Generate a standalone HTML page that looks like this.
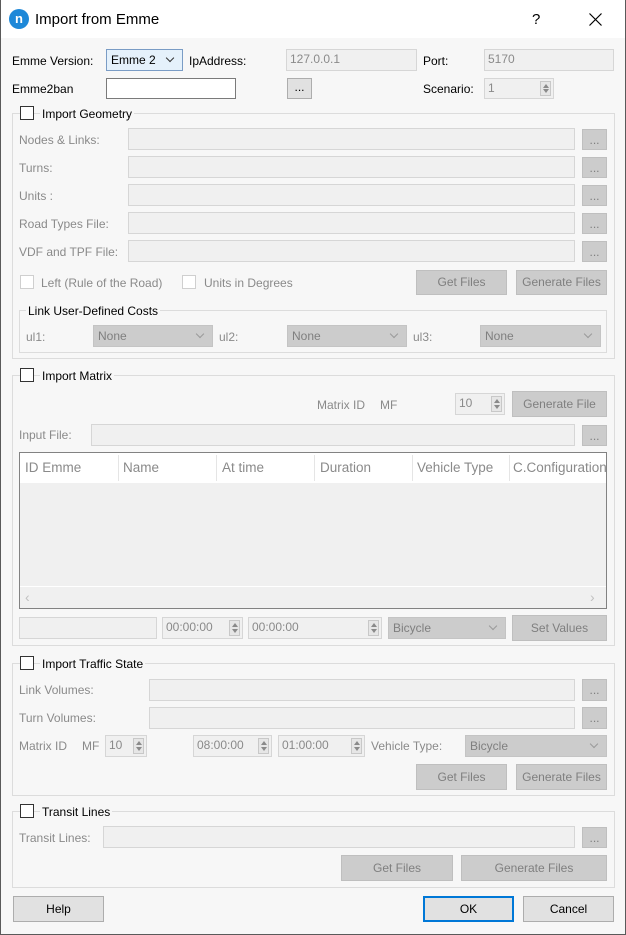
<!DOCTYPE html>
<html><head><meta charset="utf-8"><style>
*{box-sizing:border-box;margin:0;padding:0}
body{width:626px;height:935px;overflow:hidden;background:#f7f7f7;font-family:"Liberation Sans",sans-serif;font-size:12px;color:#000;position:relative}
.a{position:absolute}
.win{left:0;top:0;width:626px;height:935px;border:1px solid #5a5a5a;border-top:none}
.title{left:1px;top:0;width:624px;height:38px;background:#fff}
.l{position:absolute;white-space:nowrap;line-height:14px}
.g{color:#8a8a8a}
.f{position:absolute;background:#f0f0f0;border:1px solid #d6d6d6;color:#8a8a8a;padding-left:3px;line-height:19px}
.b{position:absolute;background:#cccccc;border:1px solid #bfbfbf;color:#7f7f7f;text-align:center}
.be{position:absolute;background:#e1e1e1;border:1px solid #adadad;color:#000;text-align:center}
.grp{position:absolute;border:1px solid #dcdcdc}
.cb{position:absolute;width:14px;height:14px;border:1px solid #333;background:#fff}
.cbd{position:absolute;width:14px;height:14px;border:1px solid #cfcfcf;background:#fff}
.lg{position:absolute;background:#f7f7f7;padding:0 2px;line-height:14px;white-space:nowrap}
.cmb{position:absolute;background:#cccccc;border:1px solid #c4c4c4;color:#7f7f7f;padding-left:4px}
.cmb:after{content:"";position:absolute;right:9px;top:5px;width:5px;height:5px;border-right:1px solid #9a9a9a;border-bottom:1px solid #9a9a9a;transform:rotate(45deg)}
.sp{position:absolute;right:2px;top:2px;width:11px;bottom:2px;border:1px solid #c8c8c8;background:#e6e6e6}
.sp:before{content:"";position:absolute;left:2px;top:2px;border-left:3px solid transparent;border-right:3px solid transparent;border-bottom:4px solid #8a8a8a}
.sp:after{content:"";position:absolute;left:2px;bottom:2px;border-left:3px solid transparent;border-right:3px solid transparent;border-top:4px solid #8a8a8a}
</style></head><body>
<div class="a title"></div>
<div class="a win"></div>
<div class="a" style="left:9px;top:9px;width:20px;height:20px;border-radius:50%;background:#1e88d8;color:#fff;font-size:13px;font-weight:bold;text-align:center;line-height:19px">n</div>
<div class="l" style="left:35px;top:11px;font-size:15px;line-height:18px">Import from Emme</div>
<div class="l" style="left:532px;top:11px;font-size:15px;line-height:18px">?</div>
<svg class="a" style="left:589px;top:13px" width="13" height="13"><path d="M0.5 0.5L12.5 12.5M12.5 0.5L0.5 12.5" stroke="#000" stroke-width="1.2"/></svg>

<div class="l" style="left:12px;top:54px">Emme Version:</div>
<div class="a" style="left:106px;top:49px;width:77px;height:22px;border:1px solid #7a9cc5;background:#e5f1fb;padding-left:4px;line-height:20px">Emme 2</div>
<div class="a" style="left:167px;top:55px;width:6px;height:6px;border-right:1px solid #333;border-bottom:1px solid #333;transform:rotate(45deg)"></div>
<div class="l" style="left:189px;top:54px">IpAddress:</div>
<div class="f" style="left:286px;top:49px;width:131px;height:22px">127.0.0.1</div>
<div class="l" style="left:423px;top:54px">Port:</div>
<div class="f" style="left:484px;top:49px;width:130px;height:22px">5170</div>

<div class="l" style="left:12px;top:82px">Emme2ban</div>
<div class="a" style="left:106px;top:78px;width:130px;height:21px;border:1px solid #7a7a7a;background:#fff"></div>
<div class="be" style="left:287px;top:78px;width:25px;height:21px;line-height:17px">...</div>
<div class="l" style="left:423px;top:82px">Scenario:</div>
<div class="f" style="left:484px;top:78px;width:70px;height:21px">1<div class="sp"></div></div>

<!-- Geometry -->
<div class="grp" style="left:12px;top:113px;width:603px;height:246px"></div>
<div class="lg" style="left:40px;top:107px">Import Geometry</div>
<div class="cb" style="left:20px;top:106px"></div>
<div class="l g" style="left:19px;top:133px">Nodes &amp; Links:</div>
<div class="f" style="left:128px;top:128px;width:447px;height:22px"></div>
<div class="b" style="left:582px;top:129px;width:25px;height:21px;line-height:20px">...</div>
<div class="l g" style="left:19px;top:161px">Turns:</div>
<div class="f" style="left:128px;top:156px;width:447px;height:22px"></div>
<div class="b" style="left:582px;top:157px;width:25px;height:21px;line-height:20px">...</div>
<div class="l g" style="left:19px;top:189px">Units :</div>
<div class="f" style="left:128px;top:184px;width:447px;height:22px"></div>
<div class="b" style="left:582px;top:185px;width:25px;height:21px;line-height:20px">...</div>
<div class="l g" style="left:19px;top:217px">Road Types File:</div>
<div class="f" style="left:128px;top:212px;width:447px;height:22px"></div>
<div class="b" style="left:582px;top:213px;width:25px;height:21px;line-height:20px">...</div>
<div class="l g" style="left:19px;top:245px">VDF and TPF File:</div>
<div class="f" style="left:128px;top:240px;width:447px;height:22px"></div>
<div class="b" style="left:582px;top:241px;width:25px;height:21px;line-height:20px">...</div>
<div class="cbd" style="left:20px;top:275px"></div>
<div class="l g" style="left:41px;top:276px">Left (Rule of the Road)</div>
<div class="cbd" style="left:182px;top:275px"></div>
<div class="l g" style="left:204px;top:276px">Units in Degrees</div>
<div class="b" style="left:416px;top:270px;width:91px;height:25px;line-height:23px">Get Files</div>
<div class="b" style="left:516px;top:270px;width:91px;height:25px;line-height:23px">Generate Files</div>
<div class="grp" style="left:19px;top:310px;width:588px;height:43px"></div>
<div class="lg" style="left:26px;top:304px;color:#000">Link User-Defined Costs</div>
<div class="l g" style="left:26px;top:330px">ul1:</div>
<div class="cmb" style="left:93px;top:325px;width:120px;height:22px;line-height:20px">None</div>
<div class="l g" style="left:219px;top:330px">ul2:</div>
<div class="cmb" style="left:287px;top:325px;width:120px;height:22px;line-height:20px">None</div>
<div class="l g" style="left:413px;top:330px">ul3:</div>
<div class="cmb" style="left:480px;top:325px;width:121px;height:22px;line-height:20px">None</div>

<!-- Matrix -->
<div class="grp" style="left:12px;top:375px;width:603px;height:271px"></div>
<div class="lg" style="left:40px;top:369px">Import Matrix</div>
<div class="cb" style="left:20px;top:368px"></div>
<div class="l g" style="left:317px;top:398px">Matrix ID</div>
<div class="l g" style="left:380px;top:398px">MF</div>
<div class="f" style="left:455px;top:393px;width:50px;height:22px">10<div class="sp"></div></div>
<div class="b" style="left:512px;top:391px;width:95px;height:26px;line-height:24px">Generate File</div>
<div class="l g" style="left:19px;top:428px">Input File:</div>
<div class="f" style="left:91px;top:424px;width:484px;height:22px"></div>
<div class="b" style="left:582px;top:425px;width:25px;height:21px;line-height:20px">...</div>
<div class="a" style="left:19px;top:452px;width:588px;height:157px;border:1px solid #828282;background:#f0f0f0;overflow:hidden">
 <div class="a" style="left:0;top:0;width:588px;height:30px;background:#fff;color:#8a8a8a;font-size:13.5px;line-height:30px">
  <span class="a" style="left:5px">ID Emme</span>
  <span class="a" style="left:98px;top:2px;height:26px;border-left:1px solid #e5e5e5"></span><span class="a" style="left:103px">Name</span>
  <span class="a" style="left:196px;top:2px;height:26px;border-left:1px solid #e5e5e5"></span><span class="a" style="left:202px">At time</span>
  <span class="a" style="left:294px;top:2px;height:26px;border-left:1px solid #e5e5e5"></span><span class="a" style="left:300px">Duration</span>
  <span class="a" style="left:392px;top:2px;height:26px;border-left:1px solid #e5e5e5"></span><span class="a" style="left:397px;white-space:nowrap">Vehicle Type</span>
  <span class="a" style="left:489px;top:2px;height:26px;border-left:1px solid #e5e5e5"></span><span class="a" style="left:493px;white-space:nowrap">C.Configuration</span>
 </div>
 <div class="a" style="left:0;top:133px;width:588px;height:1px;background:#fff"></div>
 <div class="l" style="left:5px;top:137px;color:#c0c0c0;font-size:14px">&lsaquo;</div>
 <div class="l" style="left:570px;top:137px;color:#c0c0c0;font-size:14px">&rsaquo;</div>
</div>
<div class="f" style="left:19px;top:617px;width:138px;height:22px"></div>
<div class="f" style="left:162px;top:617px;width:81px;height:22px">00:00:00<div class="sp"></div></div>
<div class="f" style="left:248px;top:617px;width:134px;height:22px">00:00:00<div class="sp"></div></div>
<div class="cmb" style="left:388px;top:617px;width:118px;height:22px;line-height:20px">Bicycle</div>
<div class="b" style="left:512px;top:615px;width:95px;height:26px;line-height:24px">Set Values</div>

<!-- Traffic State -->
<div class="grp" style="left:12px;top:663px;width:603px;height:133px"></div>
<div class="lg" style="left:40px;top:657px">Import Traffic State</div>
<div class="cb" style="left:20px;top:656px"></div>
<div class="l g" style="left:19px;top:683px">Link Volumes:</div>
<div class="f" style="left:149px;top:679px;width:426px;height:22px"></div>
<div class="b" style="left:582px;top:679px;width:25px;height:22px;line-height:21px">...</div>
<div class="l g" style="left:19px;top:711px">Turn Volumes:</div>
<div class="f" style="left:149px;top:707px;width:426px;height:22px"></div>
<div class="b" style="left:582px;top:707px;width:25px;height:22px;line-height:21px">...</div>
<div class="l g" style="left:19px;top:739px">Matrix ID</div>
<div class="l g" style="left:82px;top:739px">MF</div>
<div class="f" style="left:105px;top:735px;width:42px;height:22px">10<div class="sp"></div></div>
<div class="f" style="left:193px;top:735px;width:79px;height:22px">08:00:00<div class="sp"></div></div>
<div class="f" style="left:278px;top:735px;width:87px;height:22px">01:00:00<div class="sp"></div></div>
<div class="l g" style="left:371px;top:739px">Vehicle Type:</div>
<div class="cmb" style="left:465px;top:735px;width:142px;height:22px;line-height:20px">Bicycle</div>
<div class="b" style="left:416px;top:764px;width:91px;height:26px;line-height:24px">Get Files</div>
<div class="b" style="left:516px;top:764px;width:91px;height:26px;line-height:24px">Generate Files</div>

<!-- Transit -->
<div class="grp" style="left:12px;top:811px;width:603px;height:77px"></div>
<div class="lg" style="left:40px;top:805px">Transit Lines</div>
<div class="cb" style="left:20px;top:804px"></div>
<div class="l g" style="left:19px;top:831px">Transit Lines:</div>
<div class="f" style="left:103px;top:826px;width:472px;height:22px"></div>
<div class="b" style="left:582px;top:827px;width:25px;height:21px;line-height:20px">...</div>
<div class="b" style="left:341px;top:855px;width:112px;height:26px;line-height:24px">Get Files</div>
<div class="b" style="left:461px;top:855px;width:146px;height:26px;line-height:24px">Generate Files</div>

<div class="be" style="left:13px;top:896px;width:91px;height:26px;line-height:24px">Help</div>
<div class="be" style="left:423px;top:896px;width:91px;height:26px;line-height:22px;border:2px solid #0078d7">OK</div>
<div class="be" style="left:523px;top:896px;width:91px;height:26px;line-height:24px">Cancel</div>
</body></html>
